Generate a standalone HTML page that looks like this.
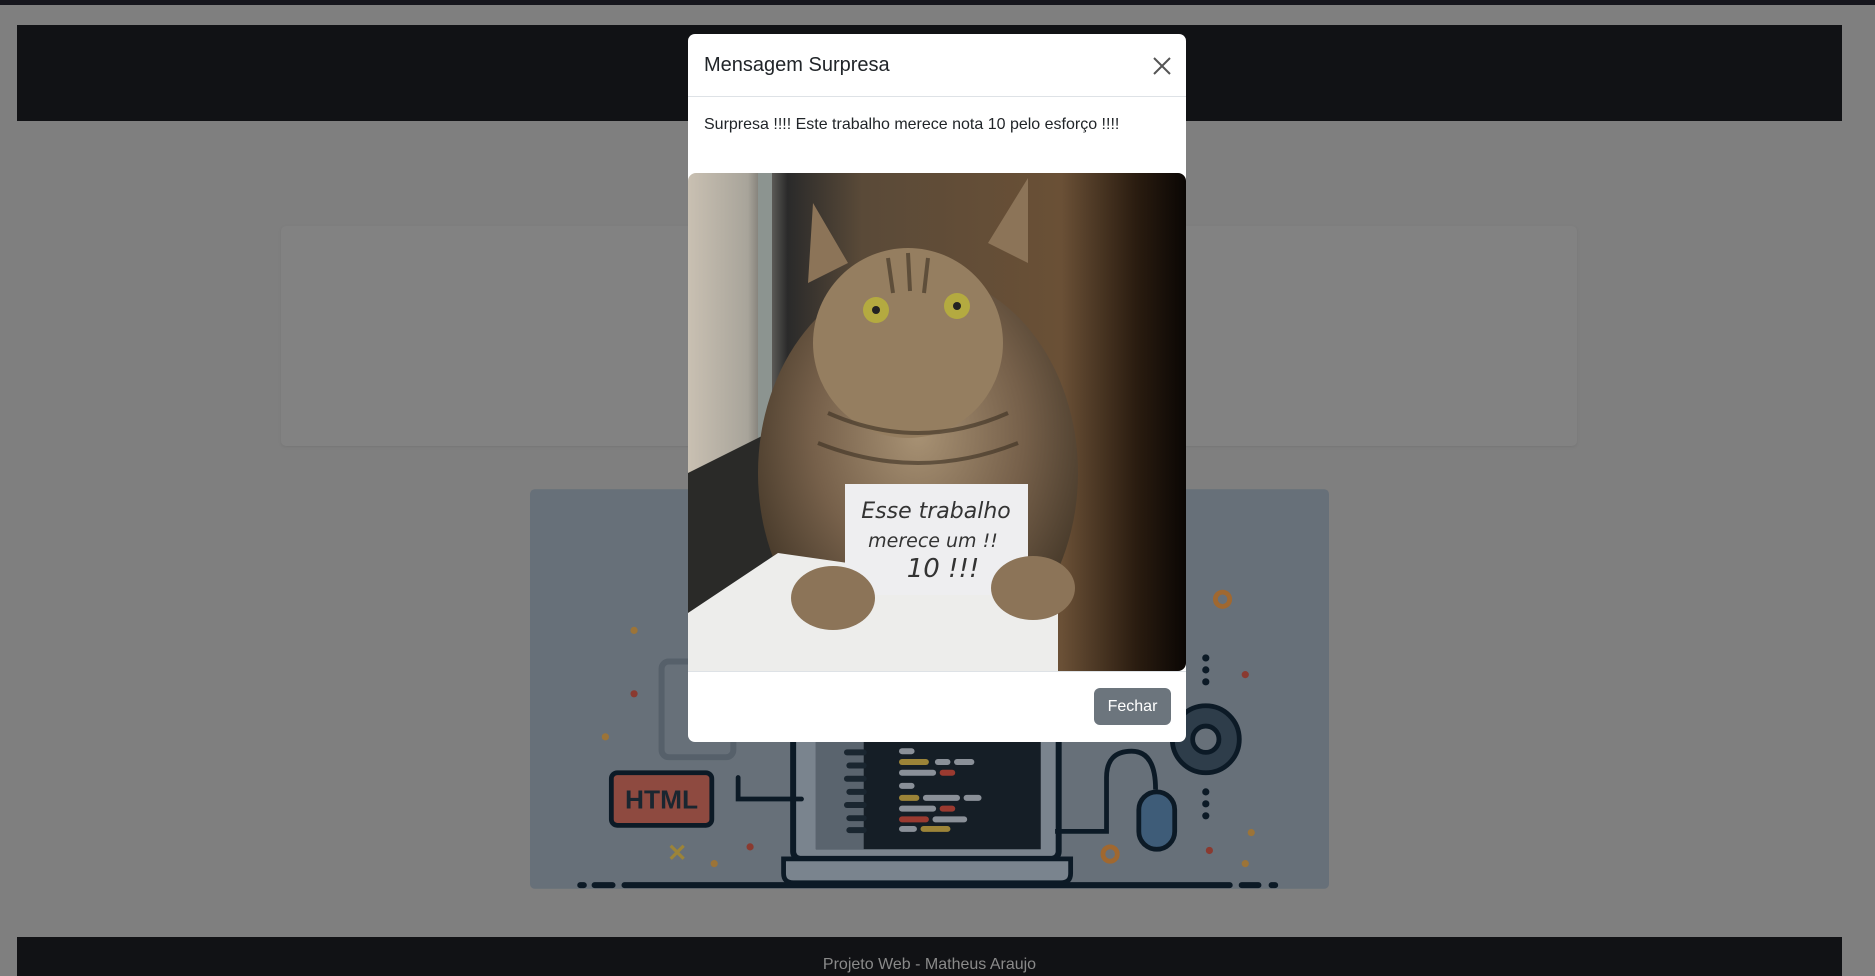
<!DOCTYPE html>
<html><head><meta charset="utf-8"><style>
*{margin:0;padding:0;box-sizing:border-box}
html,body{width:1875px;height:976px;overflow:hidden;background:#7f7f7f;font-family:"Liberation Sans",sans-serif}
.abs{position:absolute}
</style></head><body>
<div class="abs" style="left:0;top:0;width:1875px;height:5px;background:#16161d"></div>
<div class="abs" style="left:17px;top:25px;width:1825px;height:96px;background:#111215"></div>
<div class="abs" style="left:281px;top:226px;width:1296px;height:220px;background:#828282;border-radius:5px;box-shadow:0 1px 3px rgba(0,0,0,.08)"></div>
<svg class="abs" style="left:530px;top:489px" width="799" height="400" viewBox="443 409 668 334">
<rect x="443" y="409" width="668" height="334" rx="4" fill="#677079"/>
<rect x="553" y="553" width="60" height="80" rx="6" fill="none" stroke="#56606a" stroke-width="5"/>
<rect x="663" y="600" width="222" height="118" rx="6" fill="#7a848e" stroke="#0c1a26" stroke-width="5"/>
<rect x="682" y="612" width="188" height="98" fill="#151e26"/>
<rect x="682" y="612" width="40" height="98" fill="#5a646e"/>
<g stroke-linecap="round" stroke-width="5">
<line x1="708" y1="629" x2="722" y2="629" stroke="#1a2630"/><line x1="710" y1="640" x2="722" y2="640" stroke="#1a2630"/><line x1="708" y1="651" x2="722" y2="651" stroke="#1a2630"/><line x1="710" y1="662" x2="722" y2="662" stroke="#1a2630"/><line x1="708" y1="673" x2="722" y2="673" stroke="#1a2630"/><line x1="710" y1="684" x2="722" y2="684" stroke="#1a2630"/><line x1="710" y1="694" x2="722" y2="694" stroke="#1a2630"/>
<line x1="754" y1="628" x2="762" y2="628" stroke="#8a9098"/>
<line x1="754" y1="637" x2="774" y2="637" stroke="#9c8438"/><line x1="784" y1="637" x2="792" y2="637" stroke="#8a9098"/><line x1="800" y1="637" x2="812" y2="637" stroke="#8a9098"/>
<line x1="754" y1="646" x2="780" y2="646" stroke="#8a9098"/><line x1="788" y1="646" x2="796" y2="646" stroke="#9a3a30"/>
<line x1="754" y1="657" x2="762" y2="657" stroke="#8a9098"/>
<line x1="754" y1="667" x2="766" y2="667" stroke="#9c8438"/><line x1="774" y1="667" x2="800" y2="667" stroke="#8a9098"/><line x1="808" y1="667" x2="818" y2="667" stroke="#8a9098"/>
<line x1="754" y1="676" x2="780" y2="676" stroke="#8a9098"/><line x1="788" y1="676" x2="796" y2="676" stroke="#9a3a30"/>
<line x1="754" y1="685" x2="774" y2="685" stroke="#9a3a30"/><line x1="782" y1="685" x2="806" y2="685" stroke="#8a9098"/>
<line x1="754" y1="693" x2="764" y2="693" stroke="#8a9098"/><line x1="772" y1="693" x2="792" y2="693" stroke="#9c8438"/>
</g>
<path d="M655 718 H895 V730 Q895 738 887 738 H663 Q655 738 655 730Z" fill="#7a848e" stroke="#0c1a26" stroke-width="4"/>
<rect x="511" y="646" width="84" height="44" rx="5" fill="#8e4a40" stroke="#0c1a26" stroke-width="4"/>
<text x="553" y="676" text-anchor="middle" font-family="Liberation Sans" font-weight="bold" font-size="22" fill="#1a2630">HTML</text>
<path d="M617 650 V668 H670" fill="none" stroke="#0c1a26" stroke-width="4" stroke-linecap="round"/>
<path d="M882 695 H925 V650 Q925 628 946 628 Q966 628 966 660" fill="none" stroke="#0c1a26" stroke-width="4"/>
<rect x="952" y="662" width="30" height="48" rx="15" fill="#3e5c78" stroke="#0c1a26" stroke-width="4"/>
<circle cx="1008" cy="618" r="28" fill="#2e3d4a" stroke="#0c1a26" stroke-width="4"/>
<circle cx="1008" cy="618" r="11" fill="#677079" stroke="#0c1a26" stroke-width="4"/>
<g fill="#0c1a26"><circle cx="1008" cy="550" r="3"/><circle cx="1008" cy="560" r="3"/><circle cx="1008" cy="570" r="3"/><circle cx="1008" cy="662" r="3"/><circle cx="1008" cy="672" r="3"/><circle cx="1008" cy="682" r="3"/></g>
<circle cx="1022" cy="501" r="6" fill="none" stroke="#a06830" stroke-width="4"/>
<circle cx="928" cy="714" r="6" fill="none" stroke="#a06830" stroke-width="4"/>
<text x="566" y="720" text-anchor="middle" font-size="20" font-weight="bold" fill="#9c8438">✕</text>
<g fill="#8a3a30"><circle cx="530" cy="580" r="3"/><circle cx="627" cy="708" r="3"/><circle cx="1041" cy="564" r="3"/><circle cx="1011" cy="711" r="3"/></g>
<g fill="#9c7438"><circle cx="530" cy="527" r="3"/><circle cx="506" cy="616" r="3"/><circle cx="597" cy="722" r="3"/><circle cx="1046" cy="696" r="3"/><circle cx="1041" cy="722" r="3"/></g>
<path d="M485 740 H488 M497 740 H512 M522 740 H1028 M1038 740 H1052 M1063 740 H1066" stroke="#0c1a26" stroke-width="5" stroke-linecap="round"/>
</svg>
<div class="abs" style="left:17px;top:937px;width:1825px;height:39px;background:#111215;color:#8a8a8a;font-size:16px;text-align:center;padding-top:19px">Projeto Web - Matheus Araujo</div>

<div class="abs" style="left:688px;top:34px;width:498px;height:708px;background:#fff;border-radius:7px;overflow:hidden">
 <div style="height:63px;border-bottom:1px solid #dee2e6;position:relative">
  <div class="abs" style="left:16px;top:20px;font-size:20px;color:#212529">Mensagem Surpresa</div>
  <svg class="abs" style="left:465px;top:23px" width="18" height="18" viewBox="0 0 18 18"><path d="M1 1L17 17M17 1L1 17" stroke="#555" stroke-width="2"/></svg>
 </div>
 <div class="abs" style="left:16px;top:82px;font-size:16px;color:#212529">Surpresa !!!! Este trabalho merece nota 10 pelo esforço !!!!</div>
 <svg class="abs" style="left:0;top:139px" width="498" height="498" viewBox="0 0 498 498">
  <defs>
   <linearGradient id="bg" x1="0" x2="1"><stop offset="0" stop-color="#c9c0b2"/><stop offset=".12" stop-color="#a8a49a"/><stop offset=".2" stop-color="#2a2a2a"/><stop offset=".35" stop-color="#5a4a38"/><stop offset=".75" stop-color="#6a5036"/><stop offset=".9" stop-color="#2a1c10"/><stop offset="1" stop-color="#0a0604"/></linearGradient>
   <radialGradient id="cat" cx=".5" cy=".4" r=".55"><stop offset="0" stop-color="#a89274"/><stop offset=".6" stop-color="#76604a"/><stop offset="1" stop-color="#4a3c2c"/></radialGradient>
  </defs>
  <rect width="498" height="498" rx="8" fill="url(#bg)"/>
  <rect x="70" y="0" width="14" height="320" fill="#8c9490"/>
  <path d="M0 300 L100 250 L110 498 L0 498Z" fill="#2a2a28"/>
  <ellipse cx="230" cy="300" rx="160" ry="200" fill="url(#cat)"/>
  <path d="M125 30 L160 90 L120 110Z M340 5 L340 90 L300 70Z" fill="#8c7458"/>
  <ellipse cx="220" cy="170" rx="95" ry="95" fill="#957e60"/>
  <g stroke="#3a2e22" stroke-width="4" fill="none" opacity=".6"><path d="M200 85 L205 120 M220 80 L222 118 M240 85 L236 120"/><path d="M140 240 Q230 280 320 240 M130 270 Q230 310 330 270"/></g>
  <circle cx="188" cy="137" r="13" fill="#b4aa40"/><circle cx="269" cy="133" r="13" fill="#b4aa40"/>
  <circle cx="188" cy="137" r="4" fill="#222"/><circle cx="269" cy="133" r="4" fill="#222"/>
  <path d="M0 440 L90 380 L370 420 L370 498 L0 498Z" fill="#ededeb"/>
  <rect x="157" y="311" width="183" height="111" fill="#eeeef0"/>
  <text x="248" y="345" text-anchor="middle" font-family="DejaVu Sans" font-style="italic" font-size="22" fill="#333">Esse trabalho</text>
  <text x="245" y="374" text-anchor="middle" font-family="DejaVu Sans" font-style="italic" font-size="19" fill="#333">merece um !!</text>
  <text x="255" y="404" text-anchor="middle" font-family="DejaVu Sans" font-style="italic" font-size="26" fill="#333">10 !!!</text>
  <ellipse cx="145" cy="425" rx="42" ry="32" fill="#8c7458"/>
  <ellipse cx="345" cy="415" rx="42" ry="32" fill="#8c7458"/>
 </svg>
 <div class="abs" style="left:0;top:637px;width:498px;border-top:1px solid #dee2e6"></div>
 <div class="abs" style="left:406px;top:654px;width:77px;height:37px;background:#6c757d;border-radius:6px;color:#fff;font-size:16px;text-align:center;line-height:37px">Fechar</div>
</div>
</body></html>
